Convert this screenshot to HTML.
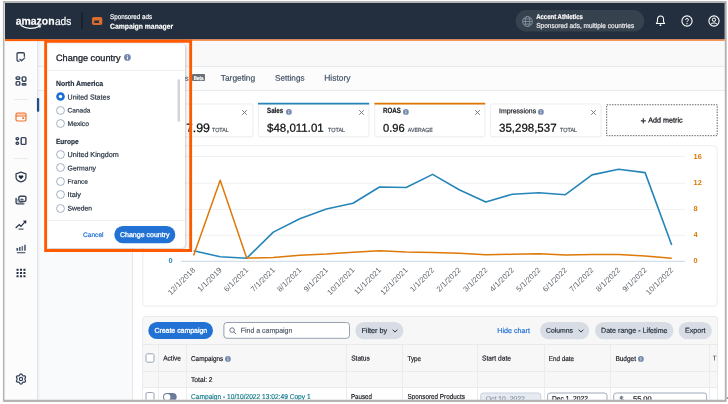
<!DOCTYPE html>
<html lang="en"><head><meta charset="utf-8"><title>Campaign manager - Change country</title>
<style>
html,body{margin:0;padding:0;background:#fff;}
body{width:728px;height:404px;position:relative;overflow:hidden;font-family:"Liberation Sans",sans-serif;-webkit-font-smoothing:antialiased;will-change:transform;}
.t{position:absolute;white-space:nowrap;margin:0;padding:0;}
.b{position:absolute;box-sizing:border-box;}
svg{position:absolute;overflow:visible;}
</style></head><body>
<div class="b" style="left:5px;top:41px;width:719px;height:358.6px;background:#fff;"></div>
<div class="b" style="left:37px;top:41px;width:688px;height:26px;background:#f9f9fa;border-bottom:1px solid #e8eaed;"></div>
<div class="b" style="left:37px;top:67px;width:688px;height:24px;background:#fcfcfc;border-bottom:1px solid #e8eaed;"></div>
<div class="b" style="left:37px;top:90.6px;width:96px;height:309.0px;background:#f9fafb;border-right:1px solid #e4e6ea;"></div>
<div class="b" style="left:5px;top:41px;width:32.6px;height:358.6px;background:#fcfcfc;border-right:1px solid #e3e5e9;box-shadow:1px 0 2px rgba(0,0,0,.06);"></div>
<div class="b" style="left:5px;top:2px;width:720px;height:37px;background:#232f3e;"></div>
<svg style="left:4px;top:37px" width="722" height="4" viewBox="0 0 722 4"><rect x="1.00" y="1.50" width="720.00" height="1.00" rx="0.00" fill="#232f3e" /></svg>
<svg style="left:4px;top:38px" width="43" height="5" viewBox="0 0 43 5"><rect x="1.00" y="1.20" width="41.00" height="1.90" rx="0.00" fill="#ff5c00" /></svg>
<svg style="left:189px;top:38px" width="537" height="4" viewBox="0 0 537 4"><rect x="1.00" y="1.35" width="535.00" height="1.50" rx="0.00" fill="#f8853f" /></svg>
<div class="t" style="left:15px;top:14px;font-size:11.20px;line-height:12px;height:12px;color:#fff;font-weight:700;transform:translate(0.70px,0.85px) rotate(0.03deg) scaleX(0.9329);transform-origin:0 50%;-webkit-text-stroke:0.18px #fff;">amazon</div>
<div class="t" style="left:54px;top:14px;font-size:11.20px;line-height:12px;height:12px;color:#fff;transform:translate(0.90px,0.85px) rotate(0.03deg) scaleX(0.9082);transform-origin:0 50%;-webkit-text-stroke:0.18px #fff;">ads</div>
<svg style="left:19px;top:24.3px" width="24" height="7" viewBox="0 0 24 7"><path d="M2 1.6 C7 5.2 15 5.2 20.6 2.2" fill="none" stroke="#fff" stroke-width="1.25" stroke-linecap="round"/><path d="M19.3 1.4 L21.7 1.6 L20.9 3.7" fill="none" stroke="#fff" stroke-width="0.85" stroke-linecap="round" stroke-linejoin="round"/></svg>
<svg style="left:80px;top:11px" width="4" height="20" viewBox="0 0 4 20"><rect x="1.30" y="1.40" width="1.30" height="16.80" rx="0.00" fill="#141b25" /></svg>
<svg style="left:91px;top:16px" width="12" height="10" viewBox="0 0 12 10"><rect x="1" y="1" width="10.3" height="8" rx="1.7" fill="#d9692c"/><rect x="3.2" y="4.6" width="5.2" height="2.3" rx="0.3" fill="#273140"/><rect x="8.4" y="4.9" width="1.2" height="1.7" fill="#f3894a"/><path d="M2 3.1H10.3" stroke="#f08a4e" stroke-width="0.5" stroke-opacity=".7"/></svg>
<div class="t" style="left:110px;top:13px;font-size:6.90px;line-height:7px;height:7px;color:#fff;transform:translate(0.00px,0.17px) rotate(0.03deg) scaleX(0.9091);transform-origin:0 50%;-webkit-text-stroke:0.18px #fff;">Sponsored ads</div>
<div class="t" style="left:110px;top:21px;font-size:7.30px;line-height:9px;height:9px;color:#fff;font-weight:700;transform:translate(0.00px,0.71px) rotate(0.03deg) scaleX(0.9329);transform-origin:0 50%;-webkit-text-stroke:0.18px #fff;">Campaign manager</div>
<svg style="left:514px;top:9px" width="132" height="24" viewBox="0 0 132 24"><rect x="1.70" y="1.10" width="128.50" height="21.50" rx="10.70" fill="#37424f" /></svg>
<svg style="left:521.5px;top:15.5px" width="11" height="11" viewBox="0 0 11 11"><g fill="none" stroke="#8d97a5" stroke-width="0.8"><circle cx="5.5" cy="5.5" r="4.9"/><ellipse cx="5.5" cy="5.5" rx="2.1" ry="4.9"/><path d="M0.6 5.5H10.4M1.3 3H9.7M1.3 8H9.7"/></g></svg>
<div class="t" style="left:536px;top:13px;font-size:6.90px;line-height:7px;height:7px;color:#fff;font-weight:700;transform:translate(0.20px,0.47px) rotate(0.03deg) scaleX(0.8697);transform-origin:0 50%;-webkit-text-stroke:0.18px #fff;">Accent Athletics</div>
<div class="t" style="left:536px;top:21px;font-size:6.90px;line-height:7px;height:7px;color:#f0f1f3;transform:translate(0.20px,0.87px) rotate(0.03deg) scaleX(0.9438);transform-origin:0 50%;-webkit-text-stroke:0.18px #f0f1f3;">Sponsored ads, multiple countries</div>
<svg style="left:655px;top:14.9px" width="11" height="12" viewBox="0 0 12 13"><path d="M6 1.1 C3.7 1.1 2.7 2.9 2.7 4.8 V7.3 L1.5 9.2 H10.5 L9.3 7.3 V4.8 C9.3 2.9 8.3 1.1 6 1.1 Z" fill="none" stroke="#fff" stroke-width="1.15" stroke-linejoin="round"/><circle cx="6" cy="11.1" r="0.95" fill="#fff"/></svg>
<svg style="left:681px;top:15px" width="12" height="12" viewBox="0 0 12 12"><circle cx="6" cy="6" r="5.1" fill="none" stroke="#fff" stroke-width="1.1"/><path d="M4.5 4.8 C4.5 3.1 7.5 3.1 7.5 4.8 C7.5 5.9 6 5.9 6 7.1" fill="none" stroke="#fff" stroke-width="1"/><circle cx="6" cy="8.7" r="0.65" fill="#fff"/></svg>
<svg style="left:707.5px;top:15px" width="12" height="12" viewBox="0 0 12 12"><circle cx="6" cy="6" r="5.1" fill="none" stroke="#fff" stroke-width="1.1"/><circle cx="6" cy="4.7" r="1.7" fill="none" stroke="#fff" stroke-width="1"/><path d="M2.6 9.6 C3.6 7.4 8.4 7.4 9.4 9.6" fill="none" stroke="#fff" stroke-width="1"/></svg>
<svg style="left:15.00px;top:51.10px" width="12" height="12" viewBox="0 0 12 12"><path d="M4.2 10.05 H3.3 Q2.05 10.05 2.05 8.8 V3 Q2.05 1.75 3.3 1.75 H8.1 Q9.35 1.75 9.35 3 V5.3" fill="none" stroke="#36435a" stroke-width="1.3" stroke-linecap="round"/><path d="M5 8.3 L6.6 9.8 L9.7 6.9" fill="none" stroke="#36435a" stroke-width="1.3" stroke-linecap="round" stroke-linejoin="round"/></svg>
<svg style="left:14.70px;top:75.05px" width="12" height="12" viewBox="0 0 12 12"><g fill="none" stroke="#36435a" stroke-width="1.4"><rect x="1.1" y="1.85" width="3.7" height="2.4" rx="1"/><rect x="7.2" y="1.85" width="3.7" height="4.4" rx="1.1"/><rect x="1.1" y="6.65" width="3.7" height="3.5" rx="1"/><rect x="7.2" y="8.65" width="3.7" height="1.5" rx="0.75"/></g></svg>
<div class="b" style="left:13.5px;top:98.6px;width:14.5px;height:1.0px;background:#e9ebee;"></div>
<svg style="left:35px;top:97px" width="6" height="16" viewBox="0 0 6 16"><rect x="1.90" y="1.00" width="2.30" height="13.80" rx="0.80" fill="#1f4e8c" /></svg>
<svg style="left:14.70px;top:111.00px" width="12" height="12" viewBox="0 0 12 12"><rect x="1" y="2" width="10" height="8" rx="1.4" fill="none" stroke="#f4722b" stroke-width="1.2"/><path d="M1 5H11" stroke="#f4722b" stroke-width="1.1"/><path d="M1.6 3.1H10.4" stroke="#f4722b" stroke-width="0.8" stroke-opacity=".75"/><rect x="7.2" y="6.2" width="1.9" height="1.9" rx="0.4" fill="#f4722b"/></svg>
<svg style="left:14.70px;top:134.85px" width="12" height="12" viewBox="0 0 12 12"><g fill="none" stroke="#36435a" stroke-width="1.4"><rect x="1.1" y="2.65" width="2.5" height="2.1" rx="1"/><rect x="1.1" y="7.25" width="2.5" height="2.1" rx="1"/><rect x="6.2" y="2.65" width="4.7" height="6.7" rx="0.9"/></g></svg>
<div class="b" style="left:13.5px;top:158.2px;width:14.5px;height:1.0px;background:#e9ebee;"></div>
<svg style="left:14.70px;top:170.65px" width="12" height="12" viewBox="0 0 12 12"><path d="M6 1.2 L10.95 2.9 V6.2 C10.95 8.7 8.7 10.2 6 10.85 C3.3 10.2 1.05 8.7 1.05 6.2 V2.9 Z" fill="none" stroke="#36435a" stroke-width="1.3" stroke-linejoin="round"/><path d="M6 8.3 L3.9 6.3 C2.9 5.2 4.3 3.7 5.5 4.6 L6 5 L6.5 4.6 C7.7 3.7 9.1 5.2 8.1 6.3 Z" fill="#1f2a3c"/></svg>
<svg style="left:14.70px;top:194.40px" width="12" height="12" viewBox="0 0 12 12"><rect x="3.85" y="2.2" width="7.05" height="5.3" rx="1.4" fill="none" stroke="#36435a" stroke-width="1.4"/><path d="M1.1 4.3 V8.6 Q1.1 9.8 2.3 9.8 H8.9" fill="none" stroke="#36435a" stroke-width="1.35" stroke-linecap="round"/><path d="M2.6 5 V7.8 Q2.6 8.5 3.3 8.5 H8" fill="none" stroke="#36435a" stroke-width="0.8" stroke-opacity=".55"/><path d="M5.5 6.2 V4.8 L6.2 4.3 L7 5.1 L7.8 4.5 L8.6 5.2 V6.2Z" fill="#36435a" fill-opacity=".9"/></svg>
<svg style="left:14.80px;top:218.50px" width="12" height="12" viewBox="0 0 12 12"><path d="M0.7 9 L4.3 5.6 L5.9 7.3 L9.6 3.3" fill="none" stroke="#253044" stroke-width="1.2"/><path d="M7.9 1.8 L11.4 1.6 L11.1 5.1 Z" fill="#1d2739"/><path d="M3.5 10.1 H8.5" stroke="#253044" stroke-width="1"/></svg>
<svg style="left:14.70px;top:242.90px" width="12" height="12" viewBox="0 0 12 12"><rect x="1.4" y="5" width="1.75" height="2.8" fill="#4a566b"/><rect x="4.1" y="4" width="1.4" height="3.8" fill="#3a465b"/><rect x="6.5" y="3" width="1.6" height="4.8" fill="#6b7688"/><rect x="9.3" y="1.8" width="1.35" height="6" fill="#323e53"/><rect x="1.9" y="9.2" width="8.4" height="1.05" fill="#3a465b"/></svg>
<svg style="left:14.80px;top:266.90px" width="12" height="12" viewBox="0 0 12 12"><rect x="1.50" y="1.70" width="2.1" height="2" rx="0.3" fill="#253044"/><rect x="1.50" y="5.00" width="2.1" height="2" rx="0.3" fill="#253044"/><rect x="1.50" y="8.30" width="2.1" height="2" rx="0.3" fill="#253044"/><rect x="4.95" y="1.70" width="2.1" height="2" rx="0.3" fill="#253044"/><rect x="4.95" y="5.00" width="2.1" height="2" rx="0.3" fill="#253044"/><rect x="4.95" y="8.30" width="2.1" height="2" rx="0.3" fill="#253044"/><rect x="8.40" y="1.70" width="2.1" height="2" rx="0.3" fill="#253044"/><rect x="8.40" y="5.00" width="2.1" height="2" rx="0.3" fill="#253044"/><rect x="8.40" y="8.30" width="2.1" height="2" rx="0.3" fill="#253044"/></svg>
<svg style="left:14.80px;top:373.30px" width="12" height="12" viewBox="0 0 12 12"><polygon points="9.83,6.00 9.90,6.34 10.08,6.72 10.30,7.15 10.47,7.63 10.52,8.11 10.39,8.54 10.09,8.86 9.65,9.06 9.15,9.15 8.66,9.17 8.24,9.21 7.92,9.32 7.65,9.55 7.42,9.89 7.15,10.30 6.83,10.69 6.43,10.97 6.00,11.07 5.57,10.97 5.17,10.69 4.85,10.30 4.58,9.89 4.35,9.55 4.09,9.32 3.76,9.21 3.34,9.17 2.85,9.15 2.35,9.06 1.91,8.86 1.61,8.54 1.48,8.11 1.53,7.63 1.70,7.15 1.92,6.72 2.10,6.34 2.17,6.00 2.10,5.66 1.92,5.28 1.70,4.85 1.53,4.37 1.48,3.89 1.61,3.46 1.91,3.14 2.35,2.94 2.85,2.85 3.34,2.83 3.76,2.79 4.08,2.68 4.35,2.45 4.58,2.11 4.85,1.70 5.17,1.31 5.57,1.03 6.00,0.93 6.43,1.03 6.83,1.31 7.15,1.70 7.42,2.11 7.65,2.45 7.91,2.68 8.24,2.79 8.66,2.83 9.15,2.85 9.65,2.94 10.09,3.14 10.39,3.47 10.52,3.89 10.47,4.37 10.30,4.85 10.08,5.28 9.90,5.66" fill="none" stroke="#36435a" stroke-width="1.25" stroke-linejoin="round"/><circle cx="6" cy="6" r="1.65" fill="none" stroke="#36435a" stroke-width="1.1"/></svg>
<div class="t" style="left:185px;top:73px;font-size:7.40px;line-height:9px;height:9px;color:#5a687c;transform:translate(0.10px,0.75px) rotate(0.03deg);transform-origin:0 50%;-webkit-text-stroke:0.18px #5a687c;">s</div>
<svg style="left:191px;top:73px" width="15" height="10" viewBox="0 0 15 10"><rect x="1.00" y="1.10" width="13.00" height="7.00" rx="1.00" fill="#6b7077" /></svg>
<div class="t" style="left:193px;top:74px;font-size:5.60px;line-height:6px;height:6px;color:#fff;font-weight:700;transform:translate(0.80px,0.53px) rotate(0.03deg) scaleX(0.7909);transform-origin:0 50%;-webkit-text-stroke:0.18px #fff;">Beta</div>
<div class="t" style="left:220px;top:72px;font-size:8.36px;line-height:10px;height:10px;color:#3f4f63;transform:translate(0.80px,0.78px) rotate(0.03deg);transform-origin:0 50%;-webkit-text-stroke:0.18px #3f4f63;">Targeting</div>
<div class="t" style="left:275px;top:73px;font-size:8.19px;line-height:9px;height:9px;color:#3f4f63;transform:translate(0.00px,0.72px) rotate(0.03deg);transform-origin:0 50%;-webkit-text-stroke:0.18px #3f4f63;">Settings</div>
<div class="t" style="left:324px;top:72px;font-size:8.48px;line-height:10px;height:10px;color:#3f4f63;transform:translate(0.20px,0.82px) rotate(0.03deg);transform-origin:0 50%;-webkit-text-stroke:0.18px #3f4f63;">History</div>
<svg style="left:138px;top:102px" width="117" height="37" viewBox="0 0 117 37"><rect x="1.60" y="1.20" width="114.20" height="34.50" rx="3.00" fill="#f7f7f8" /></svg>
<svg style="left:139px;top:102px" width="116" height="37" viewBox="0 0 116 37"><rect x="1.50" y="2.10" width="112.40" height="32.50" rx="2.00" fill="#fff" stroke="#f0f1f2" stroke-width="1" /></svg>
<svg style="left:241.4px;top:108.8px" width="7" height="7" viewBox="0 0 7 7"><path d="M1.2 1.2 L5.8 5.8 M5.8 1.2 L1.2 5.8" stroke="#666d75" stroke-width="0.9"/></svg>
<div class="t" style="left:192px;top:121px;font-size:12.37px;line-height:14px;height:14px;color:#0f1111;transform:translate(0.80px,0.06px) rotate(0.03deg);transform-origin:0 50%;-webkit-text-stroke:0.25px #0f1111;">.99</div>
<div class="t" style="left:186px;top:120px;font-size:11.60px;line-height:13px;height:13px;color:#0f1111;transform:translate(0.30px,0.79px) rotate(0.03deg);transform-origin:0 50%;-webkit-text-stroke:0.25px #0f1111;">7</div>
<div class="t" style="left:212px;top:126px;font-size:5.90px;line-height:6px;height:6px;color:#4a525c;transform:translate(0.00px,0.63px) rotate(0.03deg) scaleX(0.9042);transform-origin:0 50%;-webkit-text-stroke:0.18px #4a525c;">TOTAL</div>
<svg style="left:256px;top:102px" width="115" height="37" viewBox="0 0 115 37"><rect x="1.60" y="1.20" width="112.10" height="34.50" rx="3.00" fill="#f7f7f8" /></svg>
<svg style="left:257px;top:102px" width="114" height="37" viewBox="0 0 114 37"><rect x="1.50" y="2.10" width="110.30" height="32.50" rx="2.00" fill="#fff" stroke="#f0f1f2" stroke-width="1" /></svg>
<svg style="left:257px;top:101px" width="114" height="5" viewBox="0 0 114 5"><rect x="1.00" y="1.70" width="111.30" height="1.90" rx="0.60" fill="#2584b8" /></svg>
<div class="t" style="left:267px;top:106px;font-size:7.60px;line-height:9px;height:9px;color:#16191f;font-weight:700;transform:translate(0.00px,0.31px) rotate(0.03deg) scaleX(0.8207);transform-origin:0 50%;-webkit-text-stroke:0.18px #16191f;">Sales</div>
<svg style="left:285.5px;top:108.69999999999999px" width="5.8" height="5.8" viewBox="0 0 6 6"><circle cx="3" cy="3" r="3" fill="#7489ac"/><rect x="2.6" y="2.55" width="0.8" height="2.2" fill="#fff"/><rect x="2.6" y="1.2" width="0.8" height="0.85" fill="#fff"/></svg>
<svg style="left:357.5px;top:108.8px" width="7" height="7" viewBox="0 0 7 7"><path d="M1.2 1.2 L5.8 5.8 M5.8 1.2 L1.2 5.8" stroke="#666d75" stroke-width="0.9"/></svg>
<div class="t" style="left:267px;top:121px;font-size:11.52px;line-height:12px;height:12px;color:#0f1111;transform:translate(0.00px,0.76px) rotate(0.03deg);transform-origin:0 50%;-webkit-text-stroke:0.25px #0f1111;">$48,011.01</div>
<div class="t" style="left:328px;top:126px;font-size:5.90px;line-height:6px;height:6px;color:#4a525c;transform:translate(0.00px,0.63px) rotate(0.03deg) scaleX(0.9313);transform-origin:0 50%;-webkit-text-stroke:0.18px #4a525c;">TOTAL</div>
<svg style="left:372px;top:102px" width="115" height="37" viewBox="0 0 115 37"><rect x="1.90" y="1.20" width="111.80" height="34.50" rx="3.00" fill="#f7f7f8" /></svg>
<svg style="left:373px;top:102px" width="114" height="37" viewBox="0 0 114 37"><rect x="1.80" y="2.10" width="110.00" height="32.50" rx="2.00" fill="#fff" stroke="#f0f1f2" stroke-width="1" /></svg>
<svg style="left:373px;top:101px" width="114" height="5" viewBox="0 0 114 5"><rect x="1.30" y="1.70" width="111.00" height="1.90" rx="0.60" fill="#dd7703" /></svg>
<div class="t" style="left:383px;top:106px;font-size:7.60px;line-height:9px;height:9px;color:#16191f;font-weight:700;transform:translate(0.00px,0.31px) rotate(0.03deg) scaleX(0.8197);transform-origin:0 50%;-webkit-text-stroke:0.18px #16191f;">ROAS</div>
<svg style="left:403.1px;top:108.69999999999999px" width="5.8" height="5.8" viewBox="0 0 6 6"><circle cx="3" cy="3" r="3" fill="#7489ac"/><rect x="2.6" y="2.55" width="0.8" height="2.2" fill="#fff"/><rect x="2.6" y="1.2" width="0.8" height="0.85" fill="#fff"/></svg>
<svg style="left:473.5px;top:108.8px" width="7" height="7" viewBox="0 0 7 7"><path d="M1.2 1.2 L5.8 5.8 M5.8 1.2 L1.2 5.8" stroke="#666d75" stroke-width="0.9"/></svg>
<div class="t" style="left:383px;top:121px;font-size:11.15px;line-height:12px;height:12px;color:#0f1111;transform:translate(0.00px,0.64px) rotate(0.03deg);transform-origin:0 50%;-webkit-text-stroke:0.25px #0f1111;">0.96</div>
<div class="t" style="left:407px;top:126px;font-size:5.90px;line-height:6px;height:6px;color:#4a525c;transform:translate(0.80px,0.63px) rotate(0.03deg) scaleX(0.8900);transform-origin:0 50%;-webkit-text-stroke:0.18px #4a525c;">AVERAGE</div>
<svg style="left:488px;top:102px" width="115" height="37" viewBox="0 0 115 37"><rect x="1.60" y="1.20" width="112.20" height="34.50" rx="3.00" fill="#f7f7f8" /></svg>
<svg style="left:489px;top:102px" width="114" height="37" viewBox="0 0 114 37"><rect x="1.50" y="2.10" width="110.40" height="32.50" rx="2.00" fill="#fff" stroke="#f0f1f2" stroke-width="1" /></svg>
<div class="t" style="left:499px;top:107px;font-size:6.90px;line-height:7px;height:7px;color:#16191f;transform:translate(0.00px,0.17px) rotate(0.03deg);transform-origin:0 50%;-webkit-text-stroke:0.18px #16191f;">Impressions</div>
<svg style="left:538.1px;top:108.69999999999999px" width="5.8" height="5.8" viewBox="0 0 6 6"><circle cx="3" cy="3" r="3" fill="#7489ac"/><rect x="2.6" y="2.55" width="0.8" height="2.2" fill="#fff"/><rect x="2.6" y="1.2" width="0.8" height="0.85" fill="#fff"/></svg>
<svg style="left:589.5px;top:108.8px" width="7" height="7" viewBox="0 0 7 7"><path d="M1.2 1.2 L5.8 5.8 M5.8 1.2 L1.2 5.8" stroke="#666d75" stroke-width="0.9"/></svg>
<div class="t" style="left:499px;top:121px;font-size:11.51px;line-height:12px;height:12px;color:#0f1111;transform:translate(0.00px,0.76px) rotate(0.03deg);transform-origin:0 50%;-webkit-text-stroke:0.25px #0f1111;">35,298,537</div>
<div class="t" style="left:560px;top:126px;font-size:5.90px;line-height:6px;height:6px;color:#4a525c;transform:translate(0.00px,0.63px) rotate(0.03deg) scaleX(0.9313);transform-origin:0 50%;-webkit-text-stroke:0.18px #4a525c;">TOTAL</div>
<svg style="left:0;top:0" width="728" height="404" viewBox="0 0 728 404"><rect x="606.7" y="104.75" width="110.5" height="30.95" fill="#fff" stroke="#5d6166" stroke-width="1" stroke-dasharray="1.45 1.22"/></svg>
<div class="t" style="left:640px;top:114px;font-size:9.59px;line-height:11px;height:11px;color:#16191f;transform:translate(0.50px,0.90px) rotate(0.03deg);transform-origin:0 50%;-webkit-text-stroke:0.3px #16191f;">+</div>
<div class="t" style="left:648px;top:115px;font-size:7.20px;line-height:9px;height:9px;color:#16191f;transform:translate(0.30px,0.48px) rotate(0.03deg);transform-origin:0 50%;-webkit-text-stroke:0.25px #16191f;">Add metric</div>
<svg style="left:141px;top:143px" width="578" height="165" viewBox="0 0 578 165"><rect x="1.00" y="1.90" width="576.00" height="162.10" rx="4.50" fill="#f7f7f8" /></svg>
<svg style="left:141px;top:144px" width="578" height="164" viewBox="0 0 578 164"><rect x="1.90" y="1.80" width="574.20" height="160.20" rx="3.50" fill="#fff" stroke="#eff0f1" stroke-width="1" /></svg>
<svg style="left:0;top:0" width="728" height="404" viewBox="0 0 728 404"><path d="M143 156.5H685" stroke="#eff0f2" stroke-width="1"/><path d="M143 183.2H685" stroke="#eff0f2" stroke-width="1"/><path d="M143 209.4H685" stroke="#eff0f2" stroke-width="1"/><path d="M143 235.2H685" stroke="#eff0f2" stroke-width="1"/><path d="M181 261.3H685" stroke="#c9d7e6" stroke-width="1"/><polyline fill="none" stroke="#2585b9" stroke-width="1.6" stroke-linejoin="round" points="193.6,250.7 220.2,256.8 246.7,258.3 273.3,232.1 299.8,218.7 326.4,209.0 353.0,203.3 379.5,187.0 406.1,187.5 432.6,174.4 459.2,189.7 485.8,202.1 512.3,194.2 538.9,192.7 565.4,194.7 592.0,174.9 618.6,169.3 645.1,172.6 671.7,245.0"/><polyline fill="none" stroke="#de7806" stroke-width="1.5" stroke-linejoin="round" points="193.6,255.6 220.2,180.2 246.7,258.1 273.3,257.6 299.8,255.3 326.4,254.1 353.0,252.3 379.5,250.8 406.1,252.1 432.6,252.6 459.2,253.2 485.8,254.8 512.3,254.3 538.9,253.8 565.4,255.0 592.0,254.5 618.6,254.6 645.1,255.9 671.7,258.3"/><text x="195.8" y="270.5" font-size="7.6" letter-spacing="0.16" fill="#5c636b" text-anchor="end" transform="rotate(-45 195.8 270.5)">12/1/2018</text><text x="222.4" y="270.5" font-size="7.6" letter-spacing="0.16" fill="#5c636b" text-anchor="end" transform="rotate(-45 222.4 270.5)">1/1/2019</text><text x="248.9" y="270.5" font-size="7.6" letter-spacing="0.16" fill="#5c636b" text-anchor="end" transform="rotate(-45 248.9 270.5)">6/1/2021</text><text x="275.5" y="270.5" font-size="7.6" letter-spacing="0.16" fill="#5c636b" text-anchor="end" transform="rotate(-45 275.5 270.5)">7/1/2021</text><text x="302.0" y="270.5" font-size="7.6" letter-spacing="0.16" fill="#5c636b" text-anchor="end" transform="rotate(-45 302.0 270.5)">8/1/2021</text><text x="328.6" y="270.5" font-size="7.6" letter-spacing="0.16" fill="#5c636b" text-anchor="end" transform="rotate(-45 328.6 270.5)">9/1/2021</text><text x="355.2" y="270.5" font-size="7.6" letter-spacing="0.16" fill="#5c636b" text-anchor="end" transform="rotate(-45 355.2 270.5)">10/1/2021</text><text x="381.7" y="270.5" font-size="7.6" letter-spacing="0.16" fill="#5c636b" text-anchor="end" transform="rotate(-45 381.7 270.5)">11/1/2021</text><text x="408.3" y="270.5" font-size="7.6" letter-spacing="0.16" fill="#5c636b" text-anchor="end" transform="rotate(-45 408.3 270.5)">12/1/2021</text><text x="434.8" y="270.5" font-size="7.6" letter-spacing="0.16" fill="#5c636b" text-anchor="end" transform="rotate(-45 434.8 270.5)">1/1/2022</text><text x="461.4" y="270.5" font-size="7.6" letter-spacing="0.16" fill="#5c636b" text-anchor="end" transform="rotate(-45 461.4 270.5)">2/1/2022</text><text x="488.0" y="270.5" font-size="7.6" letter-spacing="0.16" fill="#5c636b" text-anchor="end" transform="rotate(-45 488.0 270.5)">3/1/2022</text><text x="514.5" y="270.5" font-size="7.6" letter-spacing="0.16" fill="#5c636b" text-anchor="end" transform="rotate(-45 514.5 270.5)">4/1/2022</text><text x="541.1" y="270.5" font-size="7.6" letter-spacing="0.16" fill="#5c636b" text-anchor="end" transform="rotate(-45 541.1 270.5)">5/1/2022</text><text x="567.6" y="270.5" font-size="7.6" letter-spacing="0.16" fill="#5c636b" text-anchor="end" transform="rotate(-45 567.6 270.5)">6/1/2022</text><text x="594.2" y="270.5" font-size="7.6" letter-spacing="0.16" fill="#5c636b" text-anchor="end" transform="rotate(-45 594.2 270.5)">7/1/2022</text><text x="620.8" y="270.5" font-size="7.6" letter-spacing="0.16" fill="#5c636b" text-anchor="end" transform="rotate(-45 620.8 270.5)">8/1/2022</text><text x="647.3" y="270.5" font-size="7.6" letter-spacing="0.16" fill="#5c636b" text-anchor="end" transform="rotate(-45 647.3 270.5)">9/1/2022</text><text x="673.9" y="270.5" font-size="7.6" letter-spacing="0.16" fill="#5c636b" text-anchor="end" transform="rotate(-45 673.9 270.5)">10/1/2022</text><text x="693.6" y="158.5" font-size="7.4" font-weight="700" fill="#dd7703">16</text><text x="693.6" y="185.0" font-size="7.4" font-weight="700" fill="#dd7703">12</text><text x="693.6" y="211.0" font-size="7.4" font-weight="700" fill="#dd7703">8</text><text x="693.6" y="237.2" font-size="7.4" font-weight="700" fill="#dd7703">4</text><text x="693.6" y="262.7" font-size="7.4" font-weight="700" fill="#dd7703">0</text><text x="168.5" y="262.9" font-size="7.4" font-weight="700" fill="#2585b9">0</text></svg>
<div class="b" style="left:142.3px;top:315.7px;width:575.7px;height:85.30000000000001px;background:#f7f7f7;border:1px solid #e9ebed;border-radius:4px 4px 0 0;border-bottom:none;"></div>
<svg style="left:147px;top:321px" width="67" height="20" viewBox="0 0 67 20"><rect x="1.30" y="1.00" width="64.70" height="17.10" rx="8.60" fill="#2172d4" /></svg>
<div class="t" style="left:154px;top:326px;font-size:6.95px;line-height:7px;height:7px;color:#fff;transform:translate(0.40px,0.79px) rotate(0.03deg);transform-origin:0 50%;-webkit-text-stroke:0.3px #fff;">Create campaign</div>
<svg style="left:222px;top:321px" width="129" height="19" viewBox="0 0 129 19"><rect x="1.90" y="1.50" width="125.60" height="15.80" rx="3.00" fill="#fff" stroke="#95a0b1" stroke-width="1" /></svg>
<svg style="left:229px;top:326.6px" width="8" height="8" viewBox="0 0 8 8"><circle cx="3.1" cy="3.1" r="2.3" fill="none" stroke="#5e6b7d" stroke-width="0.9"/><path d="M4.8 4.8 L7.2 7.2" stroke="#5e6b7d" stroke-width="0.9"/></svg>
<div class="t" style="left:240px;top:326px;font-size:6.97px;line-height:7px;height:7px;color:#4d5766;transform:translate(0.80px,0.80px) rotate(0.03deg);transform-origin:0 50%;-webkit-text-stroke:0.18px #4d5766;">Find a campaign</div>
<svg style="left:354px;top:321px" width="51" height="20" viewBox="0 0 51 20"><rect x="1.30" y="1.00" width="48.10" height="17.30" rx="8.70" fill="#d8dde5" /></svg>
<div class="t" style="left:361px;top:325px;font-size:7.28px;line-height:9px;height:9px;color:#232f3e;transform:translate(0.40px,0.91px) rotate(0.03deg);transform-origin:0 50%;-webkit-text-stroke:0.18px #232f3e;">Filter by</div>
<svg style="left:392px;top:328.7px" width="6" height="4" viewBox="0 0 6 4"><path d="M0.7 0.7 L3 3.1 L5.3 0.7" fill="none" stroke="#232f3e" stroke-width="0.95"/></svg>
<div class="t" style="left:497px;top:327px;font-size:7.17px;line-height:8px;height:8px;color:#2172d4;transform:translate(0.30px,0.07px) rotate(0.03deg);transform-origin:0 50%;-webkit-text-stroke:0.18px #2172d4;">Hide chart</div>
<svg style="left:539px;top:321px" width="52" height="20" viewBox="0 0 52 20"><rect x="1.00" y="1.00" width="49.30" height="17.30" rx="8.70" fill="#d8dde5" /></svg>
<div class="t" style="left:546px;top:326px;font-size:6.84px;line-height:7px;height:7px;color:#232f3e;transform:translate(0.00px,0.75px) rotate(0.03deg);transform-origin:0 50%;-webkit-text-stroke:0.18px #232f3e;">Columns</div>
<svg style="left:578.3px;top:328.7px" width="6" height="4" viewBox="0 0 6 4"><path d="M0.7 0.7 L3 3.1 L5.3 0.7" fill="none" stroke="#232f3e" stroke-width="0.95"/></svg>
<svg style="left:594px;top:321px" width="81" height="20" viewBox="0 0 81 20"><rect x="1.00" y="1.00" width="78.50" height="17.30" rx="8.70" fill="#d8dde5" /></svg>
<div class="t" style="left:601px;top:326px;font-size:7.13px;line-height:8px;height:8px;color:#232f3e;transform:translate(0.00px,0.85px) rotate(0.03deg);transform-origin:0 50%;-webkit-text-stroke:0.18px #232f3e;">Date range - Lifetime</div>
<svg style="left:677px;top:321px" width="36" height="20" viewBox="0 0 36 20"><rect x="1.70" y="1.00" width="33.10" height="17.30" rx="8.70" fill="#d8dde5" /></svg>
<div class="t" style="left:685px;top:326px;font-size:7.13px;line-height:8px;height:8px;color:#232f3e;transform:translate(0.00px,0.85px) rotate(0.03deg);transform-origin:0 50%;-webkit-text-stroke:0.18px #232f3e;">Export</div>
<div class="b" style="left:143.3px;top:343.8px;width:573.7px;height:27.80000000000001px;background:#f7f7f7;border-top:1px solid #e9eaec;border-bottom:1px solid #e9eaec;"></div>
<div class="b" style="left:143.3px;top:371.6px;width:573.7px;height:16.399999999999977px;background:#f7f7f7;border-bottom:1px solid #e9eaec;"></div>
<div class="b" style="left:143.3px;top:388px;width:573.7px;height:12px;background:#fff;"></div>
<div class="b" style="left:158.1px;top:344px;width:1.0px;height:56px;background:#ebecee;"></div>
<div class="b" style="left:186.3px;top:344px;width:1.0px;height:56px;background:#ebecee;"></div>
<div class="b" style="left:346.0px;top:344px;width:1.0px;height:56px;background:#ebecee;"></div>
<div class="b" style="left:402.0px;top:344px;width:1.0px;height:56px;background:#ebecee;"></div>
<div class="b" style="left:476.9px;top:344px;width:1.0px;height:56px;background:#ebecee;"></div>
<div class="b" style="left:543.8px;top:344px;width:1.0px;height:56px;background:#ebecee;"></div>
<div class="b" style="left:609.9px;top:344px;width:1.0px;height:56px;background:#ebecee;"></div>
<div class="b" style="left:709.3px;top:344px;width:1.0px;height:56px;background:#ebecee;"></div>
<svg style="left:144px;top:352px" width="12" height="12" viewBox="0 0 12 12"><rect x="2.00" y="1.80" width="8.00" height="8.40" rx="1.50" fill="#fff" stroke="#97a3b6" stroke-width="1" /></svg>
<div class="t" style="left:163px;top:354px;font-size:7.00px;line-height:7px;height:7px;color:#16191f;transform:translate(0.20px,0.51px) rotate(0.03deg) scaleX(0.9338);transform-origin:0 50%;-webkit-text-stroke:0.18px #16191f;">Active</div>
<div class="t" style="left:191px;top:354px;font-size:7.00px;line-height:7px;height:7px;color:#16191f;transform:translate(0.00px,0.51px) rotate(0.03deg) scaleX(0.9094);transform-origin:0 50%;-webkit-text-stroke:0.18px #16191f;">Campaigns</div>
<svg style="left:225.1px;top:355.70000000000005px" width="5.8" height="5.8" viewBox="0 0 6 6"><circle cx="3" cy="3" r="3" fill="#7489ac"/><rect x="2.6" y="2.55" width="0.8" height="2.2" fill="#fff"/><rect x="2.6" y="1.2" width="0.8" height="0.85" fill="#fff"/></svg>
<div class="t" style="left:351px;top:354px;font-size:7.00px;line-height:7px;height:7px;color:#16191f;transform:translate(0.20px,0.51px) rotate(0.03deg) scaleX(0.9373);transform-origin:0 50%;-webkit-text-stroke:0.18px #16191f;">Status</div>
<div class="t" style="left:407px;top:354px;font-size:7.00px;line-height:7px;height:7px;color:#16191f;transform:translate(0.50px,0.51px) rotate(0.03deg) scaleX(0.8895);transform-origin:0 50%;-webkit-text-stroke:0.18px #16191f;">Type</div>
<div class="t" style="left:482px;top:354px;font-size:7.00px;line-height:7px;height:7px;color:#16191f;transform:translate(0.00px,0.51px) rotate(0.03deg) scaleX(0.9555);transform-origin:0 50%;-webkit-text-stroke:0.18px #16191f;">Start date</div>
<div class="t" style="left:548px;top:354px;font-size:7.00px;line-height:7px;height:7px;color:#16191f;transform:translate(0.70px,0.51px) rotate(0.03deg) scaleX(0.9028);transform-origin:0 50%;-webkit-text-stroke:0.18px #16191f;">End date</div>
<div class="t" style="left:615px;top:354px;font-size:7.00px;line-height:7px;height:7px;color:#16191f;transform:translate(0.40px,0.51px) rotate(0.03deg) scaleX(0.9285);transform-origin:0 50%;-webkit-text-stroke:0.18px #16191f;">Budget</div>
<svg style="left:638.4px;top:355.6px" width="5.8" height="5.8" viewBox="0 0 6 6"><circle cx="3" cy="3" r="3" fill="#7489ac"/><rect x="2.6" y="2.55" width="0.8" height="2.2" fill="#fff"/><rect x="2.6" y="1.2" width="0.8" height="0.85" fill="#fff"/></svg>
<div class="t" style="left:712px;top:354px;font-size:7.00px;line-height:7px;height:7px;color:#3a4048;transform:translate(0.60px,0.51px) rotate(0.03deg);transform-origin:0 50%;overflow:hidden;width:4.2px;">T</div>
<div class="t" style="left:191px;top:376px;font-size:7.00px;line-height:7px;height:7px;color:#16191f;transform:translate(0.00px,0.01px) rotate(0.03deg) scaleX(0.9571);transform-origin:0 50%;-webkit-text-stroke:0.18px #16191f;">Total: 2</div>
<svg style="left:144px;top:391px" width="12" height="12" viewBox="0 0 12 12"><rect x="2.00" y="1.50" width="8.00" height="8.40" rx="1.50" fill="#fff" stroke="#97a3b6" stroke-width="1" /></svg>
<svg style="left:163px;top:393.2px" width="14" height="8.4" viewBox="0 0 14 8.4"><rect x="0" y="0" width="13.7" height="8.2" rx="4.1" fill="#6c7c98"/><circle cx="4.2" cy="4.1" r="3.2" fill="#fff"/></svg>
<div class="t" style="left:191px;top:392px;font-size:7.15px;line-height:8px;height:8px;color:#117c8b;transform:translate(0.00px,0.71px) rotate(0.03deg) scaleX(0.9273);transform-origin:0 50%;-webkit-text-stroke:0.18px #117c8b;">Campaign - 10/10/2022 13:02:49 Copy 1</div>
<div class="t" style="left:351px;top:392px;font-size:7.15px;line-height:8px;height:8px;color:#16191f;transform:translate(0.00px,0.71px) rotate(0.03deg) scaleX(0.8660);transform-origin:0 50%;-webkit-text-stroke:0.18px #16191f;">Paused</div>
<div class="t" style="left:407px;top:392px;font-size:7.15px;line-height:8px;height:8px;color:#16191f;transform:translate(0.40px,0.66px) rotate(0.03deg) scaleX(0.8890);transform-origin:0 50%;-webkit-text-stroke:0.18px #16191f;">Sponsored Products</div>
<svg style="left:479px;top:391px" width="64" height="16" viewBox="0 0 64 16"><rect x="1.70" y="2.00" width="60.10" height="12.50" rx="2.50" fill="#e6ebf2" stroke="#c9d1dc" stroke-width="1" /></svg>
<div class="t" style="left:485px;top:394px;font-size:7.20px;line-height:9px;height:9px;color:#8b97a8;transform:translate(0.70px,0.28px) rotate(0.03deg) scaleX(0.9532);transform-origin:0 50%;-webkit-text-stroke:0.18px #8b97a8;">Oct 10, 2022</div>
<svg style="left:546px;top:391px" width="63" height="16" viewBox="0 0 63 16"><rect x="1.60" y="2.00" width="59.40" height="12.50" rx="2.50" fill="#fff" stroke="#9fa9b9" stroke-width="1" /></svg>
<div class="t" style="left:552px;top:394px;font-size:7.20px;line-height:9px;height:9px;color:#16191f;transform:translate(0.00px,0.28px) rotate(0.03deg) scaleX(0.9272);transform-origin:0 50%;-webkit-text-stroke:0.18px #16191f;">Dec 1, 2022</div>
<svg style="left:612px;top:391px" width="97" height="16" viewBox="0 0 97 16"><rect x="1.70" y="2.00" width="92.90" height="12.50" rx="2.50" fill="#fff" stroke="#9fa9b9" stroke-width="1" /></svg>
<div class="t" style="left:619px;top:394px;font-size:7.20px;line-height:9px;height:9px;color:#4d5766;transform:translate(0.50px,0.28px) rotate(0.03deg) scaleX(1.0239);transform-origin:0 50%;-webkit-text-stroke:0.18px #4d5766;">$</div>
<div class="t" style="left:633px;top:394px;font-size:7.20px;line-height:9px;height:9px;color:#16191f;transform:translate(0.00px,0.28px) rotate(0.03deg) scaleX(1.0323);transform-origin:0 50%;-webkit-text-stroke:0.18px #16191f;">55.00</div>
<div class="b" style="left:47px;top:44px;width:138.3px;height:203.8px;background:#fff;border-radius:0 3.5px 3.5px 0;box-shadow:1px 1px 3px rgba(0,0,0,.22);"></div>
<div class="t" style="left:56px;top:52px;font-size:9.16px;line-height:10px;height:10px;color:#1d222b;transform:translate(0.00px,0.95px) rotate(0.03deg);transform-origin:0 50%;-webkit-text-stroke:0.3px #1d222b;">Change country</div>
<svg style="left:123.89999999999999px;top:54.0px" width="6.8" height="6.8" viewBox="0 0 6 6"><circle cx="3" cy="3" r="3" fill="#7489ac"/><rect x="2.6" y="2.55" width="0.8" height="2.2" fill="#fff"/><rect x="2.6" y="1.2" width="0.8" height="0.85" fill="#fff"/></svg>
<div class="b" style="left:48px;top:70px;width:137.3px;height:1px;background:#eef0f2;"></div>
<svg style="left:176px;top:78px" width="5" height="45" viewBox="0 0 5 45"><rect x="1.60" y="1.20" width="2.40" height="42.60" rx="1.00" fill="#d2d3d5" /></svg>
<div class="t" style="left:56px;top:79px;font-size:7.40px;line-height:9px;height:9px;color:#232f3e;font-weight:700;transform:translate(0.00px,0.25px) rotate(0.03deg) scaleX(0.9307);transform-origin:0 50%;-webkit-text-stroke:0.18px #232f3e;">North America</div>
<svg style="left:55.7px;top:92.4px" width="9" height="9" viewBox="0 0 9 9"><circle cx="4.5" cy="4.5" r="4.3" fill="#176fd6"/><circle cx="4.5" cy="4.5" r="1.7" fill="#fff"/></svg>
<div class="t" style="left:67px;top:93px;font-size:7.06px;line-height:7px;height:7px;color:#232f3e;transform:translate(0.60px,0.43px) rotate(0.03deg);transform-origin:0 50%;-webkit-text-stroke:0.18px #232f3e;">United States</div>
<svg style="left:55.7px;top:105.60000000000001px" width="9" height="9" viewBox="0 0 9 9"><circle cx="4.5" cy="4.5" r="3.95" fill="#fff" stroke="#9ba7ba" stroke-width="0.9"/></svg>
<div class="t" style="left:67px;top:106px;font-size:6.54px;line-height:7px;height:7px;color:#232f3e;transform:translate(0.60px,0.45px) rotate(0.03deg);transform-origin:0 50%;-webkit-text-stroke:0.18px #232f3e;">Canada</div>
<svg style="left:55.7px;top:119.0px" width="9" height="9" viewBox="0 0 9 9"><circle cx="4.5" cy="4.5" r="3.95" fill="#fff" stroke="#9ba7ba" stroke-width="0.9"/></svg>
<div class="t" style="left:67px;top:119px;font-size:6.76px;line-height:7px;height:7px;color:#232f3e;transform:translate(0.60px,0.92px) rotate(0.03deg);transform-origin:0 50%;-webkit-text-stroke:0.18px #232f3e;">Mexico</div>
<div class="t" style="left:56px;top:137px;font-size:7.40px;line-height:9px;height:9px;color:#232f3e;font-weight:700;transform:translate(0.00px,0.15px) rotate(0.03deg) scaleX(0.8865);transform-origin:0 50%;-webkit-text-stroke:0.18px #232f3e;">Europe</div>
<svg style="left:55.7px;top:150.0px" width="9" height="9" viewBox="0 0 9 9"><circle cx="4.5" cy="4.5" r="3.95" fill="#fff" stroke="#9ba7ba" stroke-width="0.9"/></svg>
<div class="t" style="left:67px;top:150px;font-size:7.20px;line-height:9px;height:9px;color:#232f3e;transform:translate(0.60px,0.08px) rotate(0.03deg);transform-origin:0 50%;-webkit-text-stroke:0.18px #232f3e;">United Kingdom</div>
<svg style="left:55.7px;top:163.4px" width="9" height="9" viewBox="0 0 9 9"><circle cx="4.5" cy="4.5" r="3.95" fill="#fff" stroke="#9ba7ba" stroke-width="0.9"/></svg>
<div class="t" style="left:67px;top:164px;font-size:6.91px;line-height:7px;height:7px;color:#232f3e;transform:translate(0.60px,0.38px) rotate(0.03deg);transform-origin:0 50%;-webkit-text-stroke:0.18px #232f3e;">Germany</div>
<svg style="left:55.7px;top:176.8px" width="9" height="9" viewBox="0 0 9 9"><circle cx="4.5" cy="4.5" r="3.95" fill="#fff" stroke="#9ba7ba" stroke-width="0.9"/></svg>
<div class="t" style="left:67px;top:177px;font-size:6.55px;line-height:7px;height:7px;color:#232f3e;transform:translate(0.60px,0.65px) rotate(0.03deg);transform-origin:0 50%;-webkit-text-stroke:0.18px #232f3e;">France</div>
<svg style="left:55.7px;top:190.0px" width="9" height="9" viewBox="0 0 9 9"><circle cx="4.5" cy="4.5" r="3.95" fill="#fff" stroke="#9ba7ba" stroke-width="0.9"/></svg>
<div class="t" style="left:67px;top:190px;font-size:7.31px;line-height:9px;height:9px;color:#232f3e;transform:translate(0.60px,0.11px) rotate(0.03deg);transform-origin:0 50%;-webkit-text-stroke:0.18px #232f3e;">Italy</div>
<svg style="left:55.7px;top:203.5px" width="9" height="9" viewBox="0 0 9 9"><circle cx="4.5" cy="4.5" r="3.95" fill="#fff" stroke="#9ba7ba" stroke-width="0.9"/></svg>
<div class="t" style="left:67px;top:204px;font-size:6.75px;line-height:7px;height:7px;color:#232f3e;transform:translate(0.60px,0.42px) rotate(0.03deg);transform-origin:0 50%;-webkit-text-stroke:0.18px #232f3e;">Sweden</div>
<div class="b" style="left:48px;top:220px;width:137.3px;height:1px;background:#eef0f2;"></div>
<div class="t" style="left:83px;top:230px;font-size:6.62px;line-height:7px;height:7px;color:#2172d4;transform:translate(0.00px,0.98px) rotate(0.03deg);transform-origin:0 50%;-webkit-text-stroke:0.18px #2172d4;">Cancel</div>
<svg style="left:113px;top:225px" width="64" height="20" viewBox="0 0 64 20"><rect x="1.30" y="1.10" width="61.00" height="17.10" rx="8.60" fill="#2172d4" /></svg>
<div class="t" style="left:120px;top:230px;font-size:7.03px;line-height:7px;height:7px;color:#fff;transform:translate(0.00px,0.92px) rotate(0.03deg);transform-origin:0 50%;-webkit-text-stroke:0.3px #fff;">Change country</div>
<svg style="left:0;top:0" width="728" height="404" viewBox="0 0 728 404"><path fill-rule="evenodd" fill="#ff5a00" d="M44.2 39.6H192.1V251.9H44.2Z M47.1 42.7V249H189.2V42.7Z"/><path fill-rule="evenodd" fill="#fff" d="M0 0H728V404H0Z M5 2.9H724.8V399.8H5Z"/><path fill-rule="evenodd" fill="#b5b5b5" d="M2.9 0.9H726.4V401.7H2.9Z M4.5 2.9H724.8V399.8H4.5Z"/><path d="M3.5 401.4H726.1V1.5" fill="none" stroke="#909090" stroke-opacity=".55" stroke-width="0.7"/><rect x="726.9" y="397.2" width="1.2" height="1.6" fill="#808080"/></svg>
</body></html>
